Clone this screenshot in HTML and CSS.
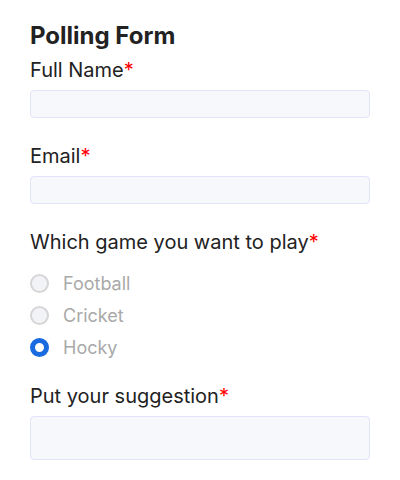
FILE: index.html
```html
<!DOCTYPE html>
<html lang="en">
<head>
<meta charset="utf-8">
<title>Polling Form</title>
<link rel="stylesheet" href="styles.css">
</head>
<body>
<form class="poll">
  <h2 class="title">Polling Form</h2>
  <div class="field">
    <label class="label">Full Name<span class="req">*</span></label>
    <input class="input" type="text">
  </div>
  <div class="field">
    <label class="label">Email<span class="req">*</span></label>
    <input class="input" type="email">
  </div>
  <div class="field">
    <label class="label">Which game you want to play<span class="req">*</span></label>
    <div class="options">
      <label class="option"><span class="radio"></span>Football</label>
      <label class="option"><span class="radio"></span>Cricket</label>
      <label class="option"><span class="radio checked"></span>Hocky</label>
    </div>
  </div>
  <div class="field">
    <label class="label">Put your suggestion<span class="req">*</span></label>
    <textarea class="textarea"></textarea>
  </div>
</form>
</body>
</html>
```
FILE: styles.css
```css
* { box-sizing: border-box; }
body {
  margin: 0;
  background: #fff;
  font-family: Inter, "Noto Sans", sans-serif;
  color: #222;
}
.poll {
  padding: 22px 30px 0 30px;
  display: flex;
  flex-direction: column;
  gap: 26px;
}
.title {
  margin: 0 0 -18px 0;
  font-size: 24px;
  line-height: 28px;
  font-weight: 700;
  color: #222;
}
.field {
  display: flex;
  flex-direction: column;
  gap: 8px;
}
.label {
  font-size: 20px;
  line-height: 24px;
  color: #222;
}
.req { color: #f00; }
.input {
  display: block;
  width: 100%;
  height: 28px;
  margin: 0;
  background: #f7f8fc;
  border: 1px solid #e2e4fa;
  border-radius: 4px;
}
.textarea {
  display: block;
  width: 100%;
  height: 44px;
  margin: 0;
  resize: none;
  background: #f7f8fc;
  border: 1px solid #e2e4fa;
  border-radius: 4px;
}
.options {
  display: flex;
  flex-direction: column;
  margin: 5px 0 -5px 0;
}
.option {
  display: flex;
  align-items: center;
  gap: 14px;
  height: 32px;
  font-size: 18px;
  color: #a9a9a9;
}
.radio {
  width: 19px;
  height: 19px;
  border-radius: 50%;
  border: 2px solid #d6d6d6;
  background: #f2f3f6;
  flex: none;
}
.radio.checked {
  border: 5px solid #1a6be0;
  background: #fff;
}
```
